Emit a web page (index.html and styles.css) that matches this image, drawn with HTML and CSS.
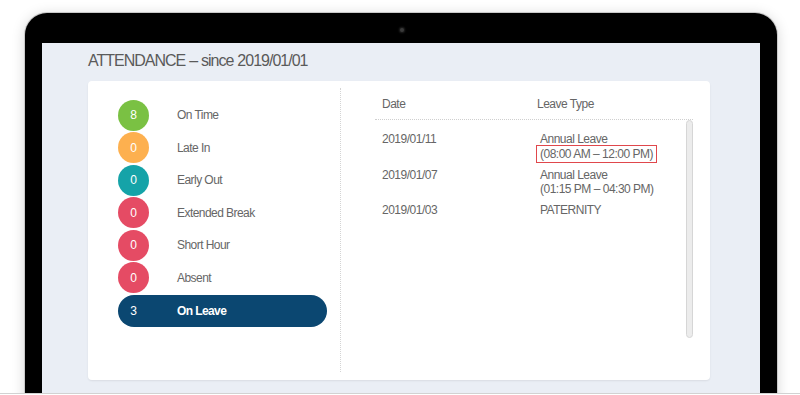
FILE: index.html
```html
<!DOCTYPE html>
<html>
<head>
<meta charset="utf-8">
<link rel="stylesheet" href="styles.css">
</head>
<body>
<div class="stage">
  <div class="laptop">
    <div class="camera"></div>
    <div class="screen">
      <h1 class="title">ATTENDANCE – since 2019/01/01</h1>
      <div class="card">
        <div class="stats">
          <div class="stat"><span class="dot green">8</span><span class="label">On Time</span></div>
          <div class="stat"><span class="dot orange">0</span><span class="label">Late In</span></div>
          <div class="stat"><span class="dot teal">0</span><span class="label">Early Out</span></div>
          <div class="stat"><span class="dot red">0</span><span class="label">Extended Break</span></div>
          <div class="stat"><span class="dot red">0</span><span class="label">Short Hour</span></div>
          <div class="stat"><span class="dot red">0</span><span class="label">Absent</span></div>
          <div class="stat active"><span class="dot">3</span><span class="label">On Leave</span></div>
        </div>
        <div class="leaves">
          <div class="thead"><span class="c-date">Date</span><span class="c-type">Leave Type</span></div>
          <div class="tbody">
            <div class="rows">
              <div class="row"><span class="c-date">2019/01/11</span><span class="c-type">Annual Leave<br><span class="hl">(08:00 AM – 12:00 PM)</span></span></div>
              <div class="row"><span class="c-date">2019/01/07</span><span class="c-type">Annual Leave<br>(01:15 PM – 04:30 PM)</span></div>
              <div class="row"><span class="c-date">2019/01/03</span><span class="c-type">PATERNITY</span></div>
            </div>
            <div class="scroll"></div>
          </div>
        </div>
      </div>
    </div>
  </div>
</div>
</body>
</html>
```
FILE: styles.css
```css
html, body {
  margin: 0;
  padding: 0;
  background: #ffffff;
}
body {
  font-family: "Liberation Sans", Arial, sans-serif;
  color: #666666;
}
.stage {
  height: 394px;
  border-bottom: 1px solid #d2d2d2;
  overflow: hidden;
  padding: 13px 23px 0 25px;
  box-sizing: border-box;
}
.laptop {
  width: 752px;
  height: 420px;
  box-sizing: border-box;
  background: #000000;
  border-radius: 22px 22px 0 0;
  padding: 15px 17px 0 17px;
  box-shadow: 0 0 0 1px #c9c9c9, 0 2px 14px rgba(0, 0, 0, 0.18);
}
.camera {
  width: 4px;
  height: 4px;
  border-radius: 50%;
  background: #3a3a3a;
  box-shadow: 0 0 2px 1px #222;
  margin: 0 auto 11px 358px;
}
.screen {
  background: #eaeef5;
  height: 380px;
  padding-top: 7px;
  box-sizing: border-box;
}
.title {
  margin: 0 0 9px 46px;
  font-size: 16px;
  letter-spacing: -1px;
  word-spacing: 0.5px;
  line-height: 22px;
  font-weight: normal;
  color: #5a5a5a;
}
.card {
  margin-left: 46px;
  width: 622px;
  height: 299px;
  background: #ffffff;
  border-radius: 4px;
  box-shadow: 0 1px 2px rgba(0, 0, 0, 0.08);
  padding: 7px 0 8px 0;
  box-sizing: border-box;
  display: flex;
}
.stats {
  width: 253px;
  box-sizing: border-box;
  border-right: 1px dotted #d4d4d4;
  padding: 11px 0 0 30px;
}
.stat {
  height: 32.5px;
  width: 209px;
  display: flex;
  align-items: center;
  font-size: 12px;
  letter-spacing: -0.55px;
}
.dot {
  width: 31px;
  height: 31px;
  border-radius: 50%;
  color: #ffffff;
  display: flex;
  align-items: center;
  justify-content: center;
  font-size: 12px;
  letter-spacing: 0;
  flex: none;
}
.green { background: #7ac143; }
.orange { background: #fdb04f; }
.teal { background: #15a3a8; }
.red { background: #e54b64; }
.label {
  margin-left: 28px;
  color: #666666;
}
.stat.active {
  height: 32px;
  margin-top: 1px;
  background: #0b4771;
  border-radius: 16px;
}
.stat.active .label {
  color: #ffffff;
  font-weight: bold;
  letter-spacing: -0.6px;
}
.leaves {
  flex: 1;
  padding: 0 17px 0 34px;
  font-size: 12px;
  letter-spacing: -0.5px;
}
.thead {
  height: 31px;
  border-bottom: 1px dotted #cfcfcf;
  display: flex;
  align-items: center;
}
.c-date {
  width: 155px;
  padding-left: 7px;
  flex: none;
}
.c-type {
  flex: 1;
}
.tbody {
  display: flex;
}
.rows {
  flex: 1;
  padding-top: 12px;
}
.row {
  display: flex;
  line-height: 14.5px;
  padding-bottom: 6.5px;
}
.row .c-type {
  padding-left: 3px;
}
.hl {
  border: 1px solid #e0474c;
  padding: 1px 3px;
  margin-left: -4px;
}
.scroll {
  width: 7px;
  height: 218px;
  box-sizing: border-box;
  background: #ececec;
  border: 1px solid #d6d6d6;
  border-radius: 4px;
  flex: none;
}
```
